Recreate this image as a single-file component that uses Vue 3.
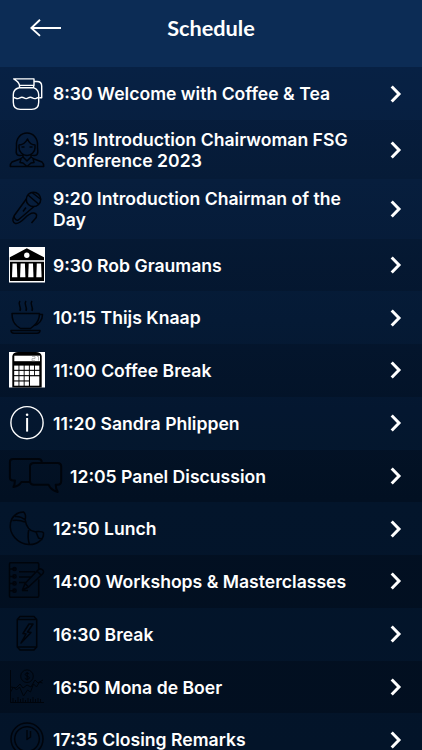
<script setup>
const items = [
    { icon: "carafe", time: "8:30", title: "Welcome with Coffee & Tea" },
    { icon: "woman", time: "9:15", title: "Introduction Chairwoman FSG Conference 2023" },
    { icon: "microphone", time: "9:20", title: "Introduction Chairman of the Day" },
    { icon: "bank", time: "9:30", title: "Rob Graumans" },
    { icon: "cup", time: "10:15", title: "Thijs Knaap" },
    { icon: "calculator", time: "11:00", title: "Coffee Break" },
    { icon: "info", time: "11:20", title: "Sandra Phlippen" },
    { icon: "panel", time: "12:05", title: "Panel Discussion" },
    { icon: "croissant", time: "12:50", title: "Lunch" },
    { icon: "notebook", time: "14:00", title: "Workshops & Masterclasses" },
    { icon: "can", time: "16:30", title: "Break" },
    { icon: "chart", time: "16:50", title: "Mona de Boer" },
    { icon: "clock", time: "17:35", title: "Closing Remarks" },
];

const light = ["carafe", "info"];
const keys = [];
for (let row = 0; row < 4; row++) {
    for (let col = 0; col < (row < 2 ? 5 : 3); col++) {
        keys.push({ x: 5.2 + col * 5.2, y: 13.6 + row * 5.3 });
    }
}
</script>

<template>
    <div class="screen">
        <header class="header">
            <button class="back" aria-label="Back">
                <svg width="32" height="18" viewBox="0 0 32 18">
                    <path d="M31 9H1.300M10 .8 1.300 9 10 16.900" />
                </svg>
            </button>
            <h1 class="title">Schedule</h1>
        </header>

        <ul class="list">
            <li v-for="item in items" :key="item.time" class="item">
                <svg
                    class="icon"
                    :class="{ light: light.includes(item.icon), wide: item.icon === 'panel' }"
                    :viewBox="item.icon === 'panel' ? '0 0 53 36' : '0 0 36 36'"
                >
                    <g v-if="item.icon === 'carafe'">
                        <path d="M4.700 2.900H25v6.500H10.500C10 6 7.500 4.500 4.700 2.900ZM10.500 9.400v2.400M24.600 9.400v2.400M10 11.800h15c3.500 1.500 4.700 4 4.700 7v7.500c0 4.500-2.700 7.100-7 7.100H11.300c-4.300 0-7-2.600-7-7.100v-7.500c0-3 2-6 5.700-7Z" />
                        <path d="M25 5.500h3c3 0 4.700 1.700 4.700 4.500v11.700h-2.500M4.500 21.500c2 0 2 1.100 4.200 1.100s2.100-1.300 4.200-1.300 2.100 1.300 4.200 1.300 2.100-1.300 4.200-1.300 2.100 1.300 4.200 1.300 2.200-1.100 4-1.100" />
                    </g>
                    <g v-else-if="item.icon === 'woman'">
                        <path d="M8 22.500c-2-3 0-5-.5-9C7 6 12 1 18 1s11 5 10.500 12.500c-.5 4 1.500 6-.5 9-1.500 1.800-4 1-6 .5M8 22.500c1.500 1.800 4 1 6 .5M9.500 13c4 0 7-2 9-6 1.500 4 4 6 8 6M10 13v3c0 4 4 7.500 8 7.500s8-3.500 8-7.500v-3M12.500 15h3M20.500 15h3" />
                        <path d="M14 22v3l-3 2-8 3c-1.300 1-1.700 2.500-1.700 4.500h33.400c0-2-.4-3.500-1.700-4.500l-8-3-3-2v-3M14 25l4 4 4-4M12 26.500l-1 4 3 .5 4 3.500 4-3.500 3-.5-1-4" />
                    </g>
                    <g v-else-if="item.icon === 'microphone'">
                        <circle cx="24.500" cy="8.400" r="7.200" />
                        <path d="m19 4 10.500 9M23 1.500l9 7M17.300 8 5.300 24.500c-1 1.500 1.500 5.500 4 4.500L25 15.500M14 20.500l3-4" />
                        <path d="M5.500 25c-3 3-1.500 7 1 7.500 7 1 11-11 18-10.500 4 .3 4 4 1 6.500l-3 3.500" />
                    </g>
                    <g v-else-if="item.icon === 'bank'">
                        <path class="white" d="M0 0h36v35.500H0z" />
                        <path class="black" d="M17.800 1.300 35 10.300v2.900H.8v-2.900ZM1 14.700h34v19.200H1z" />
                        <circle class="white" cx="17.800" cy="8.200" r="2.700" />
                        <path v-for="x in [3.500, 11.600, 19.700, 27.800]" :key="x" class="white" :d="`M${x} 16.500h4.300l.5 13.700h-5.300z`" />
                    </g>
                    <g v-else-if="item.icon === 'cup'">
                        <path d="M3 13.500h27.500c0 5-2 9.500-6 12.500l-3 2.500h-10L8 26c-4-3-5-7.500-5-12.500ZM30 14.500h3.500c0 6-4 10-8 11M2 30.500h29c0 1.800-1.300 2.700-3 2.700H5c-1.700 0-3-.9-3-2.700ZM11 1c-3 4 2 5 0 10M17 1c-3 4 2 5 0 10M23 1c-3 4 2 5 0 10" />
                    </g>
                    <g v-else-if="item.icon === 'calculator'">
                        <path class="white" d="M0 0h36v35.500H0z" />
                        <path class="black" d="M3.300 4C4 1 6 0 9 0h18c3 0 5 1 5.700 4v31.500H3.300z" />
                        <rect class="white" x="5.300" y="3.700" width="25.700" height="5.500" />
                        <path class="digits" d="M23 4.500h3v2l-3 .2v2h3M28 4.500h1.500v4" />
                        <rect v-for="key in keys" :key="`${key.x}-${key.y}`" class="white" :x="key.x" :y="key.y" width="4.300" height="4.200" />
                        <rect class="white" x="21" y="24.300" width="9.300" height="9.400" />
                    </g>
                    <g v-else-if="item.icon === 'info'">
                        <circle cx="18" cy="17.700" r="16.100" />
                        <path class="stem" d="M18.100 13v13.600" />
                        <circle class="dot" cx="18.100" cy="9.700" r="1.300" />
                    </g>
                    <g v-else-if="item.icon === 'panel'" class="bold">
                        <path d="M32.700 4.500V4c0-2-1.500-3-3.500-3H4C2 1 .9 2.200.9 4v15.500c0 2 1 3 3 3h2c0 3-.5 5-1.500 6.500 4-.5 6.500-2.500 8-5h8.500" />
                        <path d="M25 5h23.500c2.300 0 3.700 1.300 3.700 3.500V23c0 2.300-1 3.700-3.500 3.700h-2c0 3 .8 5.200 2 7.300-4.500-1-7.500-3.500-9.200-7.300H25c-2.500 0-4-1.400-4-3.700V8.500C21 6.300 22.500 5 25 5Z" />
                    </g>
                    <g v-else-if="item.icon === 'croissant'">
                        <path d="M14.500 1C8 1 2.500 5.500 1.500 12-.5 23 9 33 20 33.500c8 .3 15-5 14.500-11.500-1-2-5-1.500-8.500-1.200-6-1-9-6.500-9.800-12C17 6 16.500 2 14.500 1ZM3.500 9.500c4-.5 8-.5 12.500 1.500M6 5.500c4-.5 7 .5 10.500 3.500M20 17c-1 5-2 10 .5 16.500M27 21l2.500 6 4 1.500" />
                    </g>
                    <g v-else-if="item.icon === 'notebook'">
                        <path d="M29.700 6V1c0-.8-.5-1.200-1.200-1.200h-27C.8-.2.500.2.500 1v32c0 .8.300 1.200 1 1.200h27c.7 0 1.200-.4 1.200-1.200V16.500M10 8.700h16M10 14h12M10 19.500h8M13 27.500h6M33 6.500c2 1 2 3 .5 4.500l-14 13-6 3 2.500-6.500 13-13.500c1.300-1.500 2.500-1.500 4-.5ZM28 8l4 4M16 20.500l3.500 3.500" />
                        <path d="M1 6h5M1 13.400h5M1 20.400h5M1 27.700h5" />
                        <circle v-for="y in [6, 13.4, 20.4, 27.7]" :key="y" cx="5.500" :cy="y" r="1.600" />
                    </g>
                    <g v-else-if="item.icon === 'can'">
                        <path d="M11 .5h14l2.700 3v27.500l-2.700 3H11l-2.700-3V3.500ZM8.500 3.500h19M8.500 31h19M20 8l-6 9.500 3 .5-5 9 10-10.500-3.500-.5L24 8Z" />
                    </g>
                    <g v-else-if="item.icon === 'chart'" class="fine">
                        <path d="M1.500 1v32.500H35M1.500 23l3-5 3 3 3-3 4 9 4-6 3 2 3-8 3 3 3-5 3 1M2 18l5 1 4-4 3 4 4-3 4 2 4-7 3 3 5-3" />
                        <path d="M4 33v-4M6.500 33v-2M9 33v-5M11.500 33v-3M14 33v-4M16.500 33v-2M19 33v-4M21.500 33v-3M24 33v-5M26.500 33v-3M29 33v-4M31.500 33v-3" />
                        <circle cx="18" cy="7.200" r="6.300" />
                        <path d="M20.200 5c-1-1.300-4-1-4 .5 0 2 4.200 1.200 4.200 3.400 0 1.800-3.400 2-4.600.4M18.200 3v8.500" />
                    </g>
                    <g v-else>
                        <circle cx="18" cy="17" r="16" />
                        <circle cx="18" cy="17" r="12.300" />
                        <path d="M18 8v9.500l3.500-2.500V9" />
                    </g>
                </svg>
                <span class="label">{{ item.time }} {{ item.title }}</span>
                <svg class="chevron" width="12" height="18" viewBox="0 0 12 18">
                    <path d="m1.700 1.500 7.300 7.500-7.300 7.500" />
                </svg>
            </li>
        </ul>
    </div>
</template>

<style>
    body {
        overflow: hidden;
        background: #031225;
    }
</style>

<style scoped>
    .screen {
        height: 750px;
        overflow: hidden;
        color: #fff;
        background: linear-gradient(#071e40 67px, #061b37 180px, #04162e 320px, #021022 500px, #020f20);
        font-family: Inter, "Liberation Sans", sans-serif;
    }

    .header {
        display: grid;
        grid-template-columns: 90px 1fr 90px;
        align-items: center;
        box-sizing: border-box;
        height: 67.2px;
        padding-bottom: 12px;
        background: #0c2c55;
    }

    .back {
        display: flex;
        padding: 0 0 0 30px;
        border: 0;
        background: none;
    }

    .back path {
        fill: none;
        stroke: #fff;
        stroke-width: 1.9;
    }

    .title {
        margin: 0;
        font: 700 21.7px/30px Lato, sans-serif;
        text-align: center;
    }

    .list {
        margin: 0;
        padding: 0;
        list-style: none;
    }

    .item {
        display: flex;
        align-items: center;
        box-sizing: border-box;
        min-height: 52.75px;
        padding: 9.15px 20px 9.15px 9px;
    }

    .item:nth-child(odd) {
        background: rgba(12, 50, 95, 0.16);
    }

    .icon {
        flex: none;
        width: 36px;
        height: 36px;
        margin: -1px 8px -1px 0;
        overflow: visible;
        fill: none;
        stroke: #00040b;
        stroke-width: 1.5;
        stroke-linejoin: round;
    }

    .icon.wide {
        width: 53px;
    }

    .icon.light {
        stroke: #fff;
        stroke-width: 1.4;
    }

    .bold {
        stroke-width: 2;
    }

    .fine {
        stroke-width: 1;
    }

    .white {
        fill: #fff;
        stroke: none;
    }

    .black {
        fill: #000;
        stroke: none;
    }

    .digits {
        stroke: #999;
        stroke-width: 0.7;
    }

    .stem {
        stroke-width: 2;
    }

    .dot {
        fill: #fff;
        stroke: none;
    }

    /* Nudge the text down to line up with the icons */
    .label {
        flex: 1;
        margin: 1px 0 -1px;
        padding-right: 30px;
        font-size: 17.6px;
        font-weight: 600;
        line-height: 20.5px;
    }

    .chevron {
        flex: none;
        margin-left: auto;
        fill: none;
        stroke: #fff;
        stroke-width: 3;
    }
</style>
